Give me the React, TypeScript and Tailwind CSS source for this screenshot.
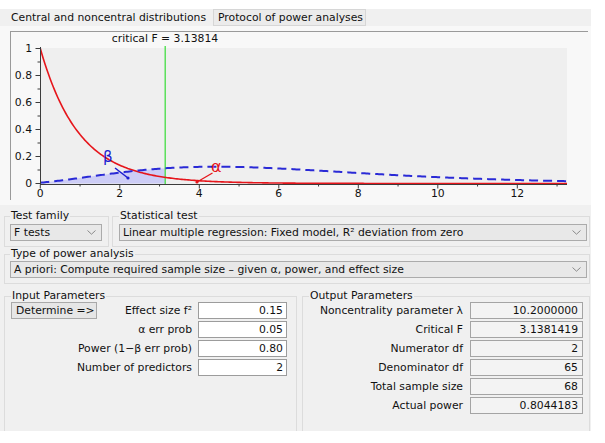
import React from "react";

function lgamma(z: number): number {
  const g = 7;
  const c = [
    0.99999999999980993, 676.5203681218851, -1259.1392167224028, 771.32342877765313,
    -176.61502916214059, 12.507343278686905, -0.13857109526572012, 9.9843695780195716e-6,
    1.5056327351493116e-7,
  ];
  if (z < 0.5) return Math.log(Math.PI / Math.sin(Math.PI * z)) - lgamma(1 - z);
  z -= 1;
  let x = c[0];
  for (let i = 1; i < g + 2; i++) x += c[i] / (z + i);
  const t = z + g + 0.5;
  return 0.5 * Math.log(2 * Math.PI) + (z + 0.5) * Math.log(t) - t + Math.log(x);
}

function ncf(xIn: number, d1: number, d2: number, lam: number): number {
  const x = xIn <= 0 ? 1e-9 : xIn;
  let s = 0;
  for (let k = 0; k < 80; k++) {
    const a = d1 / 2 + k;
    const lb = lgamma(d2 / 2) + lgamma(a) - lgamma(d2 / 2 + a);
    const lt =
      -lam / 2 +
      (k === 0 ? 0 : k * Math.log(lam / 2)) -
      lgamma(k + 1) -
      lb +
      a * Math.log(d1 / d2) +
      ((d1 + d2) / 2 + k) * Math.log(d2 / (d2 + d1 * x)) +
      (a - 1) * Math.log(x);
    s += Math.exp(lt);
  }
  return s;
}

const X0 = 40.3;
const XS = 39.75;
const Y0 = 183.5;
const YS = 135;
const XMAX = (567 - X0) / XS;
const CRIT = 3.13814;
const px = (x: number) => X0 + x * XS;
const py = (y: number) => Y0 - y * YS;

function buildPath(f: (x: number) => number, from: number, to: number, step = 0.04) {
  const pts: string[] = [];
  for (let x = from; x <= to + 1e-9; x += step) {
    pts.push(`${px(x).toFixed(2)},${py(f(x)).toFixed(2)}`);
  }
  pts.push(`${px(to).toFixed(2)},${py(f(to)).toFixed(2)}`);
  return pts;
}

const central = (x: number) => Math.pow(1 + (2 * x) / 65, -33.5);
const noncentral = (x: number) => ncf(x, 2, 65, 10.2);

const SVGFONT = "DejaVu Sans, sans-serif";

function Chart() {
  const red = buildPath(central, 0, XMAX);
  const blue = buildPath(noncentral, 0, XMAX);
  const betaPts = buildPath(noncentral, 0, CRIT, 0.02);
  const betaPoly = `${px(0)},${Y0} ${betaPts.join(" ")} ${px(CRIT)},${Y0}`;
  const yTicks = [0, 0.1, 0.2, 0.3, 0.4, 0.5, 0.6, 0.7, 0.8, 0.9, 1];
  const yLabels: [number, string][] = [
    [0, "0"],
    [0.2, "0.2"],
    [0.4, "0.4"],
    [0.6, "0.6"],
    [0.8, "0.8"],
    [1, "1"],
  ];
  const xTicks = Array.from({ length: 14 }, (_, i) => i);
  return (
    <svg width="577" height="168" viewBox="11 32 577 168" className="block">
      <defs>
        <clipPath id="plotclip">
          <rect x="40" y="46" width="527" height="139" />
        </clipPath>
      </defs>
      <rect x="40" y="48" width="527" height="136" fill="#efefef" />
      <text x="165" y="42" textAnchor="middle" fontSize="10.8" fill="#111" fontFamily={SVGFONT}>
        critical F = 3.13814
      </text>
      <g clipPath="url(#plotclip)">
        <polygon points={betaPoly} fill="#cdcdf6" />
        <line x1="165.2" y1="45" x2="165.2" y2="184" stroke="#44dd44" strokeWidth="1.3" />
        <polyline points={red.join(" ")} fill="none" stroke="#e6151b" strokeWidth="1.6" />
        <polyline points={blue.join(" ")} fill="none" stroke="#2a2ad6" strokeWidth="2" strokeDasharray="9 5" />
      </g>
      <line x1="40.5" y1="47" x2="40.5" y2="184" stroke="#3c3c3c" strokeWidth="1" />
      <line x1="40" y1="184.5" x2="567" y2="184.5" stroke="#3c3c3c" strokeWidth="1" />
      {yTicks.map((t, i) => (
        <line
          key={"yt" + i}
          x1={i % 2 === 0 ? 35.5 : 37.5}
          x2="40.5"
          y1={py(t)}
          y2={py(t)}
          stroke="#3c3c3c"
          strokeWidth="1"
        />
      ))}
      {yLabels.map(([v, s]) => (
        <text
          key={"yl" + s}
          x="32"
          y={py(v) + 3.8}
          textAnchor="end"
          fontSize="10.8"
          fill="#111"
          fontFamily={SVGFONT}
        >
          {s}
        </text>
      ))}
      {xTicks.map((t) => (
        <line
          key={"xt" + t}
          x1={px(t)}
          x2={px(t)}
          y1="184.5"
          y2={t % 2 === 0 ? 188.5 : 186.5}
          stroke="#3c3c3c"
          strokeWidth="1"
        />
      ))}
      {[0, 2, 4, 6, 8, 10, 12].map((t) => (
        <text
          key={"xl" + t}
          x={px(t)}
          y="197"
          textAnchor="middle"
          fontSize="10.8"
          fill="#111"
          fontFamily={SVGFONT}
        >
          {t}
        </text>
      ))}
      <text x="103" y="162" fontSize="15" fill="#1c1cd0" fontFamily={SVGFONT}>
        β
      </text>
      <line x1="115" y1="168" x2="128" y2="178" stroke="#1c1cd0" strokeWidth="1.5" />
      <circle cx="128" cy="178" r="1.6" fill="#1c1cd0" />
      <text x="211" y="172" fontSize="16" fill="#e6151b" fontFamily={SVGFONT}>
        α
      </text>
      <line x1="212.5" y1="173" x2="197" y2="182" stroke="#e6151b" strokeWidth="1.3" />
      <circle cx="197" cy="182" r="1.6" fill="#e6151b" />
    </svg>
  );
}

function Chevron() {
  return (
    <svg width="9" height="5" viewBox="0 0 9 5" className="shrink-0">
      <polyline points="0.5,0.5 4.5,4.2 8.5,0.5" fill="none" stroke="#8a8a8a" strokeWidth="1" />
    </svg>
  );
}

function Dropdown({ text, className = "" }: { text: string; className?: string }) {
  return (
    <div
      className={
        "h-[17px] border border-[#ababab] bg-[#e8e8e8] flex items-center justify-between pl-[3px] pr-[5px] " +
        className
      }
    >
      <span className="whitespace-nowrap">{text}</span>
      <Chevron />
    </div>
  );
}

function Legend({ children }: { children: React.ReactNode }) {
  return <legend className="px-[1px] leading-[12px] whitespace-nowrap">{children}</legend>;
}

function InField({ v }: { v: string }) {
  return (
    <div className="h-[17px] w-[89px] shrink-0 border border-[#9c9c9c] bg-white flex items-center justify-end pr-[3px]">
      {v}
    </div>
  );
}

function OutField({ v }: { v: string }) {
  return (
    <div className="h-[17px] w-[113px] shrink-0 border border-[#a4a4a4] bg-[#f3f3f3] flex items-center justify-end pr-[4px]">
      {v}
    </div>
  );
}

export default function App() {
  const inputs: [string, string][] = [
    ["Effect size f²", "0.15"],
    ["α err prob", "0.05"],
    ["Power (1−β err prob)", "0.80"],
    ["Number of predictors", "2"],
  ];
  const outputs: [string, string][] = [
    ["Noncentrality parameter λ", "10.2000000"],
    ["Critical F", "3.1381419"],
    ["Numerator df", "2"],
    ["Denominator df", "65"],
    ["Total sample size", "68"],
    ["Actual power", "0.8044183"],
  ];
  return (
    <div className="w-[605px] h-[443px] bg-white pt-[9px] font-['DejaVu_Sans',Verdana,sans-serif] text-[10.8px] leading-[12px] text-[#111]">
      <div className="w-[591px] h-[422px] bg-[#f0f0f0] flex flex-col">
        {/* tabs */}
        <div className="h-[17px] flex pl-[11px] shrink-0">
          <div className="w-[202px] h-full flex items-center whitespace-nowrap">
            Central and noncentral distributions
          </div>
          <div className="w-[153px] h-full border border-[#d6d6d6] bg-[#ebebeb] flex items-center pl-[4px] whitespace-nowrap">
            Protocol of power analyses
          </div>
        </div>
        {/* chart area */}
        <div className="h-[179px] bg-[#f8f8f8] pt-[5px] pl-[10px] shrink-0">
          <div className="w-[578px] h-[169px] border-l border-t border-[#9a9a9a] bg-[#f8f8f8]">
            <Chart />
          </div>
        </div>
        {/* settings */}
        <div className="flex-1 pl-[4px] pr-[1px] pt-[5px] flex flex-col">
          <div className="flex gap-[3px]">
            <fieldset className="w-[105px] min-w-0 h-[37px] border border-[#dcdcdc] pl-[5px] pr-[6px]">
              <Legend>Test family</Legend>
              <Dropdown text="F tests" className="mt-[2px]" />
            </fieldset>
            <fieldset className="flex-1 min-w-0 h-[37px] border border-[#dcdcdc] pl-[6px] pr-[2px]">
              <Legend>Statistical test</Legend>
              <Dropdown text="Linear multiple regression: Fixed model, R² deviation from zero" className="mt-[2px]" />
            </fieldset>
          </div>
          <fieldset className="mt-[1px] min-w-0 h-[36px] border border-[#dcdcdc] pl-[5px] pr-[2px]">
            <Legend>Type of power analysis</Legend>
            <Dropdown
              text="A priori: Compute required sample size – given α, power, and effect size"
              className="mt-[1px]"
            />
          </fieldset>
          <div className="mt-[6px] flex gap-[5px] flex-1">
            <fieldset className="w-[293px] min-w-0 shrink-0 border border-b-0 border-[#dcdcdc] pl-[6px] pr-[9px]">
              <Legend>Input Parameters</Legend>
              <div className="flex flex-col gap-[2px]">
                {inputs.map(([l, v], i) => (
                  <div key={l} className="flex items-center h-[17px]">
                    {i === 0 && (
                      <div className="h-[17px] w-[86px] shrink-0 border border-[#a9a9a9] bg-[#e6e6e6] flex items-center pl-[4px] whitespace-nowrap">
                        Determine =&gt;
                      </div>
                    )}
                    <div className="flex-1 text-right pr-[6px] whitespace-nowrap">{l}</div>
                    <InField v={v} />
                  </div>
                ))}
              </div>
            </fieldset>
            <fieldset className="flex-1 min-w-0 border border-b-0 border-[#dcdcdc] pl-[6px] pr-[6px]">
              <Legend>Output Parameters</Legend>
              <div className="flex flex-col gap-[2px]">
                {outputs.map(([l, v]) => (
                  <div key={l} className="flex items-center h-[17px]">
                    <div className="flex-1 text-right pr-[7px] whitespace-nowrap">{l}</div>
                    <OutField v={v} />
                  </div>
                ))}
              </div>
            </fieldset>
          </div>
        </div>
      </div>
    </div>
  );
}
